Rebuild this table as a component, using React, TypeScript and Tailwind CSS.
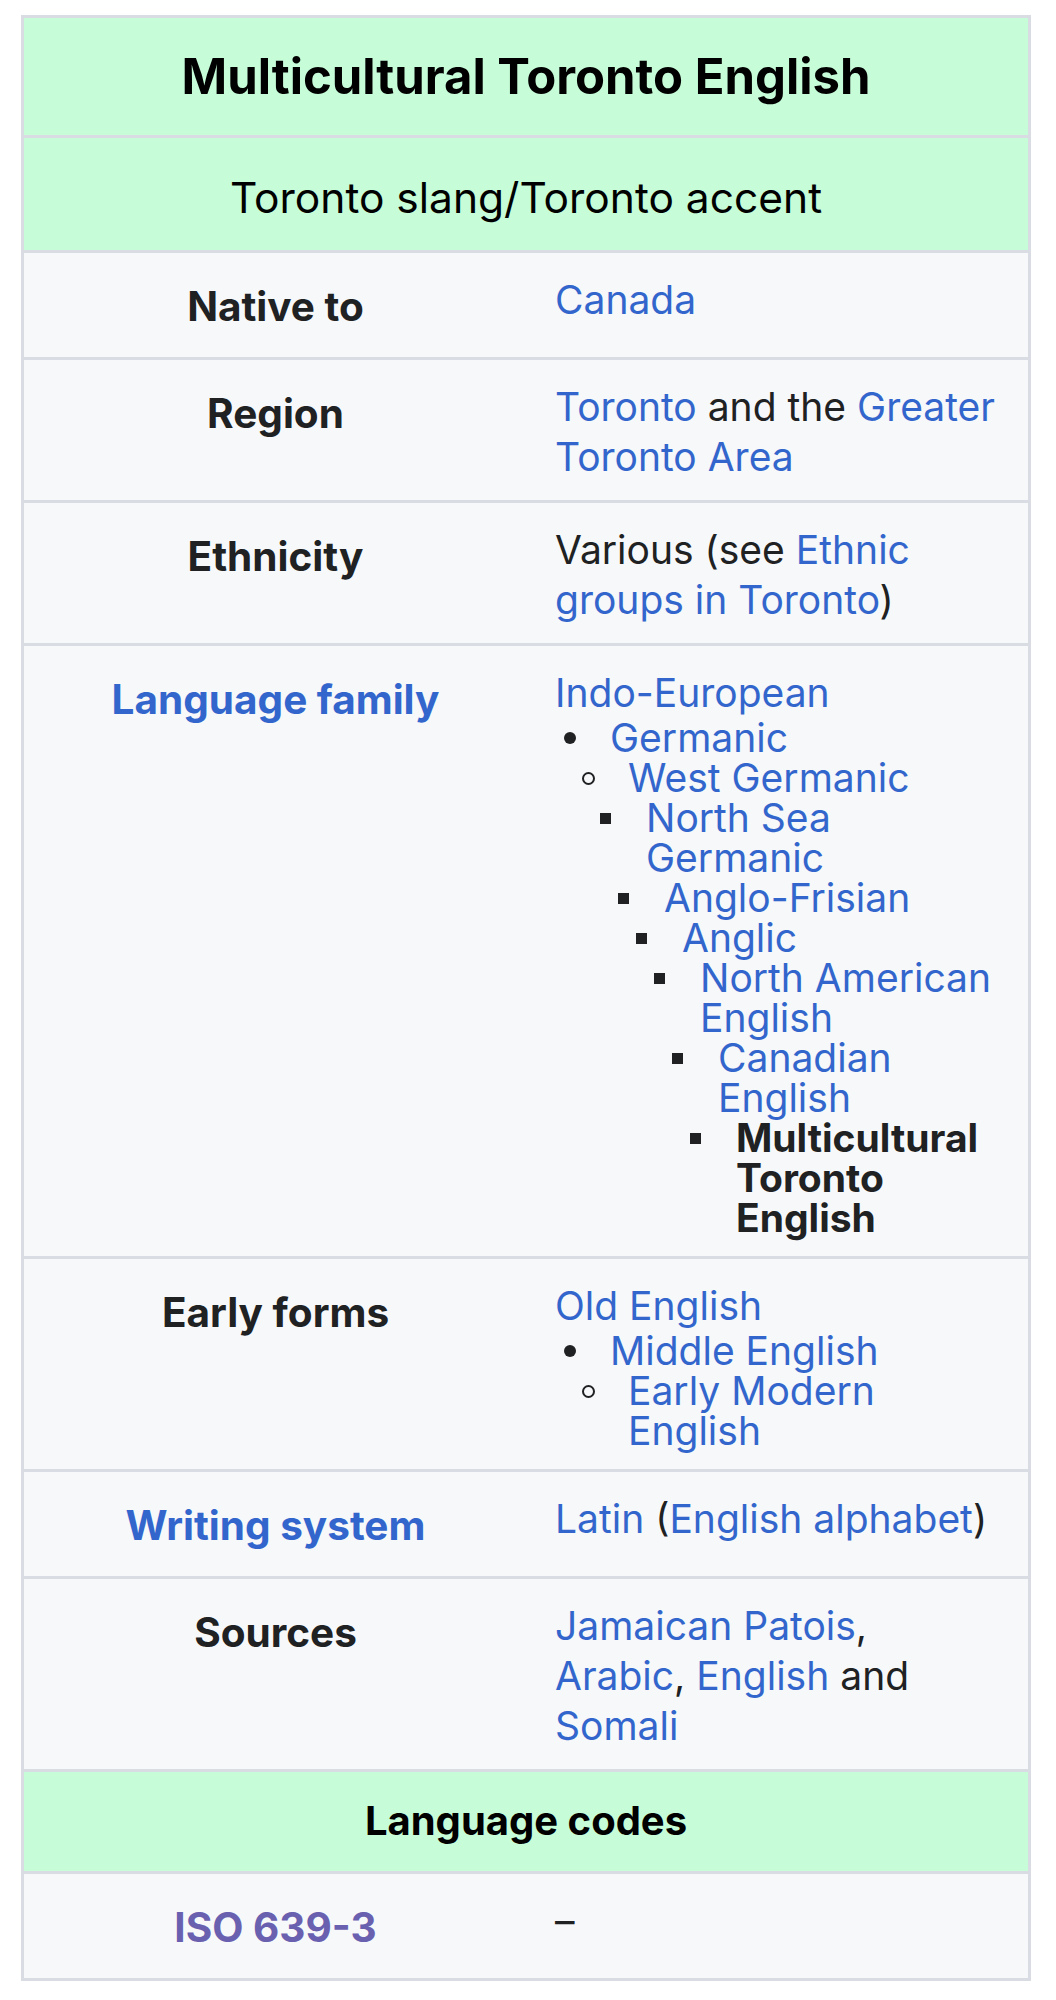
import React from 'react';

const LINK = 'text-[#3366cc]';

type Item = { level: number; text: string; bold?: boolean };

const familyTree: Item[] = [
  { level: 1, text: 'Germanic' },
  { level: 2, text: 'West Germanic' },
  { level: 3, text: 'North Sea Germanic' },
  { level: 4, text: 'Anglo-Frisian' },
  { level: 5, text: 'Anglic' },
  { level: 6, text: 'North American English' },
  { level: 7, text: 'Canadian English' },
  { level: 8, text: 'Multicultural Toronto English', bold: true },
];

const earlyTree: Item[] = [
  { level: 1, text: 'Middle English' },
  { level: 2, text: 'Early Modern English' },
];

// written out in full so tailwind picks them up
const indents = ['', 'ml-0', 'ml-[18px]', 'ml-[36px]', 'ml-[54px]', 'ml-[72px]', 'ml-[90px]', 'ml-[108px]', 'ml-[126px]'];

const Marker: React.FC<{ level: number }> = ({ level }) => {
  if (level === 1) return <span className="block w-[12px] h-[12px] rounded-full bg-[#202122]" />;
  if (level === 2) return <span className="block w-[13px] h-[13px] rounded-full border-[2.5px] border-[#202122]" />;
  return <span className="block w-[11px] h-[11px] bg-[#202122]" />;
};

const Tree: React.FC<{ items: Item[] }> = ({ items }) => (
  <div className="leading-[40px]">
    {items.map((it, i) => (
      <div key={i} className={`flex ${indents[it.level]}`}>
        <span className="w-[55px] shrink-0 h-[40px] flex items-center pl-[9px]">
          <Marker level={it.level} />
        </span>
        <span className={it.bold ? 'font-bold text-[#202122]' : LINK}>{it.text}</span>
      </div>
    ))}
  </div>
);

const Row: React.FC<{ label: React.ReactNode; children: React.ReactNode; last?: boolean }> = ({ label, children, last }) => (
  <div className={`grid grid-cols-[503px_1fr] bg-[#f6f8fa] ${last ? '' : 'border-b-[3px] border-[#d9dce2]'}`}>
    <div className="pt-[22px] pb-[18px] text-center font-bold text-[40.5px] leading-[64px] text-[#202122]">{label}</div>
    <div className="pt-[22px] pb-[18px] pl-[28px] pr-[20px] text-[39px] leading-[50px] text-[#202122]">{children}</div>
  </div>
);

export default function App() {
  return (
    <div className="min-h-[2000px] bg-white pt-[15px] pl-[21px] font-['Inter',sans-serif]">
      <div className="w-[1010px] border-[3px] border-[#d9dce2]">
        <div className="bg-[#c6fcd8] border-b-[3px] border-[#d9dce2] pt-[30px] pb-[30px] text-center text-[49px] leading-[57px] font-bold text-black">
          Multicultural Toronto English
        </div>
        <div className="bg-[#c6fcd8] border-b-[3px] border-[#d9dce2] pt-[35px] pb-[27px] text-center text-[42.5px] leading-[50px] text-black">
          Toronto slang/Toronto accent
        </div>

        <Row label="Native to">
          <span className={LINK}>Canada</span>
        </Row>

        <Row label="Region">
          <span className={LINK}>Toronto</span> and the <span className={LINK}>Greater</span>
          <br />
          <span className={LINK}>Toronto Area</span>
        </Row>

        <Row label="Ethnicity">
          Various (see <span className={LINK}>Ethnic</span>
          <br />
          <span className={LINK}>groups in Toronto</span>)
        </Row>

        <Row label={<span className={LINK}>Language family</span>}>
          <div className={LINK}>Indo-European</div>
          <Tree items={familyTree} />
        </Row>

        <Row label="Early forms">
          <div className={LINK}>Old English</div>
          <Tree items={earlyTree} />
        </Row>

        <Row label={<span className={LINK}>Writing system</span>}>
          <span className={LINK}>Latin</span> (<span className={LINK}>English alphabet</span>)
        </Row>

        <Row label="Sources">
          <span className={LINK}>Jamaican Patois</span>,
          <br />
          <span className={LINK}>Arabic</span>, <span className={LINK}>English</span> and
          <br />
          <span className={LINK}>Somali</span>
        </Row>

        <div className="bg-[#c6fcd8] border-b-[3px] border-[#d9dce2] pt-[24px] pb-[25px] text-center text-[40px] leading-[50px] font-bold text-black">
          Language codes
        </div>

        <Row label={<span className="text-[#6a60b0]">ISO 639-3</span>} last>
          <span>–</span>
        </Row>
      </div>
    </div>
  );
}
